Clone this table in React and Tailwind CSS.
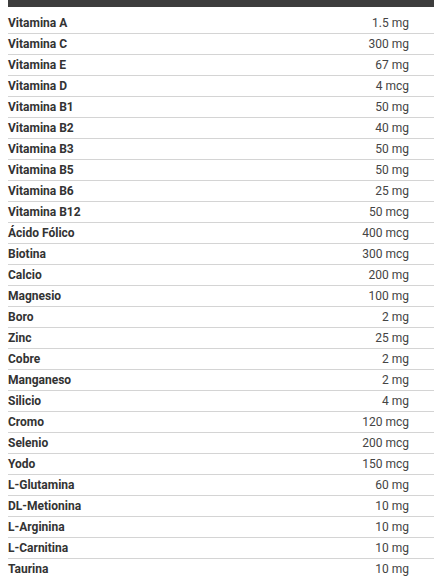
const rows = [
  ["Vitamina A", "1.5 mg"],
  ["Vitamina C", "300 mg"],
  ["Vitamina E", "67 mg"],
  ["Vitamina D", "4 mcg"],
  ["Vitamina B1", "50 mg"],
  ["Vitamina B2", "40 mg"],
  ["Vitamina B3", "50 mg"],
  ["Vitamina B5", "50 mg"],
  ["Vitamina B6", "25 mg"],
  ["Vitamina B12", "50 mcg"],
  ["Ácido Fólico", "400 mcg"],
  ["Biotina", "300 mcg"],
  ["Calcio", "200 mg"],
  ["Magnesio", "100 mg"],
  ["Boro", "2 mg"],
  ["Zinc", "25 mg"],
  ["Cobre", "2 mg"],
  ["Manganeso", "2 mg"],
  ["Silicio", "4 mg"],
  ["Cromo", "120 mcg"],
  ["Selenio", "200 mcg"],
  ["Yodo", "150 mcg"],
  ["L-Glutamina", "60 mg"],
  ["DL-Metionina", "10 mg"],
  ["L-Arginina", "10 mg"],
  ["L-Carnitina", "10 mg"],
  ["Taurina", "10 mg"],
];

export default function App() {
  return (
    <div className="w-[434px] h-[579px] overflow-hidden bg-white pl-2" style={{ fontFamily: "Roboto, 'Liberation Sans', sans-serif" }}>
      <div className="h-[7px] bg-[#3d3d3d] mb-[6px]" />
      <div className="flex flex-col">
        {rows.map(([n, v], i) => (
          <div key={i} className="flex items-center justify-between h-[21px] border-b border-[#d4d4d4] pr-[25px] text-[12px] leading-[20px]">
            <span className="font-bold text-[#333]">{n}</span>
            <span className="text-[#444]">{v}</span>
          </div>
        ))}
      </div>
    </div>
  );
}
